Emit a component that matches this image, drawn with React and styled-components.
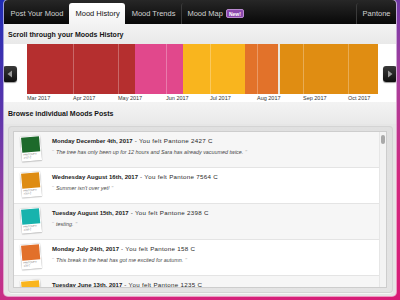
import React from "react";
import styled, { createGlobalStyle } from "styled-components";

const Global = createGlobalStyle`
  html, body { margin: 0; padding: 0; width: 400px; height: 300px; overflow: hidden; }
  body {
    background: linear-gradient(160deg, #1f2cb4 0%, #5a35ac 25%, #a8409e 50%, #d2287e 72%, #d81c76 100%);
    font-family: "Liberation Sans", Arial, sans-serif;
  }
  * { box-sizing: border-box; }
`;

const Window = styled.div`
  margin: 0 4px 4px 4px;
  height: 296px;
  display: flex;
  flex-direction: column;
  background: #e6e6e6;
  border-radius: 4px;
  box-shadow: 0 0 0 1px rgba(255, 255, 255, 0.55);
  overflow: hidden;
`;

const TabBar = styled.div`
  height: 24px;
  flex: none;
  display: flex;
  align-items: stretch;
  background: linear-gradient(#272727, #080808);
`;

const Tab = styled.div`
  display: flex;
  align-items: center;
  gap: 3px;
  padding: 0 5.5px;
  margin-top: 3px;
  font-size: 7.5px;
  white-space: nowrap;
  color: ${(p) => (p.$active ? "#111" : "#d2d2d2")};
  background: ${(p) => (p.$active ? "linear-gradient(#ffffff, #f3f3f3)" : "transparent")};
  border-radius: 3px 3px 0 0;
  border-left: 1px solid ${(p) => (p.$divider ? "#3a3a3a" : "transparent")};
  margin-left: ${(p) => (p.$right ? "auto" : "0")};
`;

const Badge = styled.span`
  display: inline-flex;
  align-items: center;
  height: 9px;
  padding: 0 2px;
  border-radius: 2px;
  background: #8b48ad;
  border: 1px solid #b98ad0;
  color: #fff;
  font-weight: bold;
  font-size: 5px;
`;

const SectionHeader = styled.div`
  flex: none;
  height: ${(p) => p.$h}px;
  display: flex;
  align-items: center;
  padding-left: ${(p) => p.$pad}px;
  font-size: 7px;
  font-weight: bold;
  color: #151515;
  background: linear-gradient(#f3f3f3, #e9e9e9);
`;

const ChartRow = styled.div`
  flex: none;
  height: 58px;
  display: flex;
  align-items: center;
  background: #fff;
`;

const ArrowButton = styled.div`
  width: 14px;
  height: 16px;
  flex: none;
  display: flex;
  align-items: center;
  justify-content: center;
  border-radius: 3px;
  background: linear-gradient(#3a3a3a, #0e0e0e);
  box-shadow: 0 1px 1px rgba(0, 0, 0, 0.4);
  margin: ${(p) => (p.$side === "left" ? "2px 10px 0 -1px" : "2px -1px 0 5px")};
`;

const ChartSvg = styled.svg`
  flex: none;
  display: block;
`;

const ListFrame = styled.div`
  flex: 1;
  min-height: 0;
  margin: 2px 3px 3px 4px;
  padding: 5px 6px 5px 5px;
  border-radius: 4px;
  background: linear-gradient(#e0e0e0, #e4e4e4);
  box-shadow: inset 0 0 0 1px #d4d4d4, 0 1px 0 #f6f6f6;
`;

const ListInner = styled.div`
  height: 100%;
  display: flex;
  background: #fff;
  border: 1px solid #cdcdcd;
  overflow: hidden;
`;

const List = styled.div`
  flex: 1;
  min-width: 0;
  overflow: hidden;
`;

const ScrollTrack = styled.div`
  width: 7px;
  flex: none;
  display: flex;
  justify-content: center;
  background: #f3f3f3;
  border-left: 1px solid #e6e6e6;
`;

const Thumb = styled.div`
  width: 4px;
  height: 9px;
  margin-top: 3px;
  border-radius: 2px;
  background: #a9a9a9;
`;

const Row = styled.div`
  height: ${(p) => (p.$last ? 21 : 36)}px;
  overflow: hidden;
  display: flex;
  align-items: flex-start;
  padding: 4px 0 0 7px;
  gap: 11px;
  border-bottom: 1px solid #e4e4e4;
  background: ${(p) => (p.$alt ? "#f6f6f6" : "#fff")};
`;

const Chip = styled.div`
  width: 20px;
  height: 25px;
  flex: none;
  padding: 1px;
  background: #fff;
  box-shadow: 0 0 1px rgba(0, 0, 0, 0.35), 0 1px 1px rgba(0, 0, 0, 0.15);
  transform: rotate(-5deg);
  display: flex;
  flex-direction: column;
`;

const ChipColor = styled.div`
  height: 15px;
  background: ${(p) => p.$color};
`;

const ChipLabel = styled.div`
  font-size: 2.4px;
  line-height: 3px;
  color: #777;
  padding: 1px 0 0 1px;
`;

const TextCol = styled.div`
  display: flex;
  flex-direction: column;
  gap: 4px;
  padding-top: 1px;
  white-space: nowrap;
`;

const Title = styled.div`
  line-height: 7px;
  color: #2a2a2a;
  font-size: 6.2px;
  letter-spacing: 0.3px;
`;

const DateText = styled.span`
  font-size: 6px;
  font-weight: bold;
  letter-spacing: 0;
  color: #1a1a1a;
`;

const Quote = styled.div`
  line-height: 7px;
  font-size: 5.4px;
  font-style: italic;
  color: #4a4a4a;
`;

const QuoteMark = styled.span`
  font-style: normal;
  font-size: 6px;
  color: #b5b5b5;
  margin: ${(p) => (p.$open ? "0 2px 0 0" : "0 0 0 2px")};
`;

const segments = [
  { x: 0, w: 108, c: "#b52f2f" },
  { x: 108, w: 48, c: "#e1488c" },
  { x: 156, w: 62, c: "#f9b51e" },
  { x: 218, w: 33, c: "#e2722a" },
  { x: 251, w: 2, c: "#ebe6dc" },
  { x: 253, w: 98, c: "#e08d12" },
];

const months = [
  { x: 0, label: "Mar 2017" },
  { x: 46, label: "Apr 2017" },
  { x: 91, label: "May 2017" },
  { x: 139, label: "Jun 2017" },
  { x: 183, label: "Jul 2017" },
  { x: 230, label: "Aug 2017" },
  { x: 276, label: "Sep 2017" },
  { x: 321, label: "Oct 2017" },
];

const posts = [
  {
    date: "Monday December 4th, 2017",
    pantone: "2427 C",
    color: "#1d6a2b",
    quote: "The tree has only been up for 12 hours and Sara has already vacuumed twice.",
  },
  { date: "Wednesday August 16th, 2017", pantone: "7564 C", color: "#de8c12", quote: "Summer isn't over yet!" },
  { date: "Tuesday August 15th, 2017", pantone: "2398 C", color: "#17b3ad", quote: "testing." },
  {
    date: "Monday July 24th, 2017",
    pantone: "158 C",
    color: "#e2702a",
    quote: "This break in the heat has got me excited for autumn.",
  },
  { date: "Tuesday June 13th, 2017", pantone: "1235 C", color: "#f9b51e", quote: null },
];

function Arrow({ side }) {
  return (
    <ArrowButton $side={side}>
      <svg width="6" height="8" viewBox="0 0 6 8">
        {side === "left" ? (
          <polygon points="5,0.5 5,7.5 0.5,4" fill="#9a9a9a" />
        ) : (
          <polygon points="1,0.5 1,7.5 5.5,4" fill="#9a9a9a" />
        )}
      </svg>
    </ArrowButton>
  );
}

export default function App() {
  return (
    <>
      <Global />
      <Window>
        <TabBar>
          <Tab>Post Your Mood</Tab>
          <Tab $active>Mood History</Tab>
          <Tab>Mood Trends</Tab>
          <Tab $divider>
            Mood Map <Badge>New!</Badge>
          </Tab>
          <Tab $divider $right>
            Pantone
          </Tab>
        </TabBar>
        <SectionHeader $h={20} $pad={4}>Scroll through your Moods History</SectionHeader>
        <ChartRow>
          <Arrow side="left" />
          <ChartSvg width="351" height="58" viewBox="0 0 351 58">
            {segments.map((s, i) => (
              <rect key={i} x={s.x} y="0" width={s.w} height="50" fill={s.c} />
            ))}
            {months.slice(1).map((m) => (
              <line key={m.x} x1={m.x + 0.5} x2={m.x + 0.5} y1="0" y2="50" stroke="rgba(255,255,255,0.28)" strokeWidth="1" />
            ))}
            {months.map((m) => (
              <text key={m.label} x={m.x} y="56" fontSize="5.5" fill="#333" fontFamily="Liberation Sans, Arial, sans-serif">
                {m.label}
              </text>
            ))}
          </ChartSvg>
          <Arrow side="right" />
        </ChartRow>
        <SectionHeader $h={22} $pad={4}>Browse individual Moods Posts</SectionHeader>
        <ListFrame>
          <ListInner>
            <List>
              {posts.map((p, i) => (
                <Row key={p.date} $alt={i % 2 === 0} $last={i === posts.length - 1}>
                  <Chip>
                    <ChipColor $color={p.color} />
                    {p.quote && (
                      <ChipLabel>
                        PANTONE®
                        <br />
                        {p.pantone}
                      </ChipLabel>
                    )}
                  </Chip>
                  <TextCol>
                    <Title>
                      <DateText>{p.date}</DateText> - You felt Pantone {p.pantone}
                    </Title>
                    {p.quote && (
                      <Quote>
                        <QuoteMark $open>“</QuoteMark>
                        {p.quote}
                        <QuoteMark>”</QuoteMark>
                      </Quote>
                    )}
                  </TextCol>
                </Row>
              ))}
            </List>
            <ScrollTrack>
              <Thumb />
            </ScrollTrack>
          </ListInner>
        </ListFrame>
      </Window>
    </>
  );
}
